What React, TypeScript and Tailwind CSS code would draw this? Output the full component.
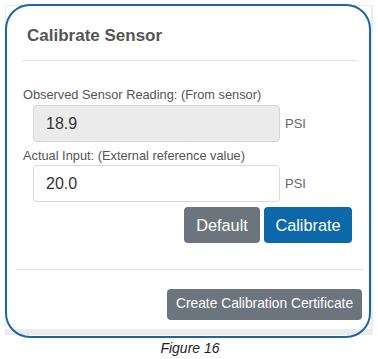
import React from "react";

export default function App() {
  return (
    <div
      className="relative w-[378px] h-[359px] bg-white overflow-hidden"
      style={{ fontFamily: '"Liberation Sans", Arial, sans-serif' }}
    >
      <div className="pl-[5px] pt-[5px]">
        <div className="w-[368px] h-[330px] bg-[#ebebeb] pl-px pt-px">
          <div className="w-[365px] h-[323px] bg-white flex flex-col">
            <div className="pt-[20px] pl-[21px] h-[40px] text-[17px] leading-[20px] font-bold text-[#555]">
              Calibrate Sensor
            </div>
            <div className="mt-[14px] ml-[16px] mr-[13px] h-px bg-[#e3e3e3]" />
            <div className="mt-[26px] pl-[17px] text-[12.8px] leading-[16px] text-[#555]">
              Observed Sensor Reading: (From sensor)
            </div>
            <div className="mt-[2px] pl-[27px] flex items-center">
              <div className="w-[247px] h-[37px] bg-[#ebebeb] border border-[#d6d6d6] rounded-[4px] pl-[12px] flex items-center text-[16px] text-[#333]">
                18.9
              </div>
              <span className="ml-[5px] text-[13px] text-[#666]">PSI</span>
            </div>
            <div className="mt-[6px] pl-[17px] text-[12.8px] leading-[16px] text-[#555]">
              Actual Input: (External reference value)
            </div>
            <div className="mt-px pl-[27px] flex items-center">
              <div className="w-[247px] h-[37px] bg-white border border-[#d9d9d9] rounded-[4px] pl-[12px] flex items-center text-[16px] text-[#333]">
                20.0
              </div>
              <span className="ml-[5px] text-[13px] text-[#666]">PSI</span>
            </div>
            <div className="mt-[5px] mr-[19px] flex justify-end gap-[4px]">
              <div className="w-[76px] h-[36px] rounded-[4px] bg-[#6c757d] text-white text-[16.3px] flex items-center justify-center">
                Default
              </div>
              <div className="w-[88px] h-[36px] rounded-[4px] bg-[#0d68aa] text-white text-[16.3px] flex items-center justify-center">
                Calibrate
              </div>
            </div>
            <div className="mt-[26px] ml-[10px] mr-[7px] h-px bg-[#e6e6e6]" />
            <div className="mt-[19px] mr-[9px] flex justify-end">
              <div className="w-[195px] h-[31px] rounded-[4px] bg-[#6c757d] text-white text-[13.8px] flex items-center justify-center">
                Create Calibration Certificate
              </div>
            </div>
          </div>
        </div>
      </div>
      <div className="absolute left-[5px] top-[4px] w-[366px] h-[334px] border-2 border-[#1a66a8] rounded-[25px] pointer-events-none" />
      <div className="mt-[3px] text-center pl-[2px] text-[14px] italic text-[#222]">
        Figure 16
      </div>
    </div>
  );
}
